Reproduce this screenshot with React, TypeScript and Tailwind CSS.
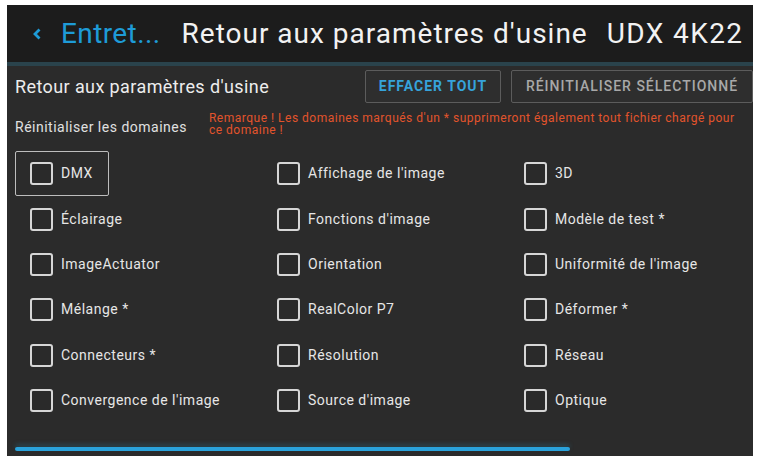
import React from "react";

const items: string[][] = [
  ["DMX", "Affichage de l'image", "3D"],
  ["Éclairage", "Fonctions d'image", "Modèle de test *"],
  ["ImageActuator", "Orientation", "Uniformité de l'image"],
  ["Mélange *", "RealColor P7", "Déformer *"],
  ["Connecteurs *", "Résolution", "Réseau"],
  ["Convergence de l'image", "Source d'image", "Optique"],
];

function Cell({ label, focused }: { label: string; focused?: boolean }) {
  return (
    <div className="flex items-center h-[45.4px]">
      <div
        className={
          "flex items-center h-full pl-[14px] pr-[15px] rounded-[2px] border " +
          (focused ? "border-[#bdbdbd]" : "border-transparent")
        }
      >
        <div className="w-[23px] h-[23px] rounded-[3px] border-2 border-[#d6d6d6] bg-[#2a2a2a]" />
        <span className="ml-[8px] text-[14px] tracking-[0.5px] text-[#e6e6e6] whitespace-nowrap">{label}</span>
      </div>
    </div>
  );
}

export default function App() {
  return (
    <div
      className="w-[762px] h-[456px] bg-white pt-[5px] pl-[7px] pr-[9px] overflow-hidden"
      style={{ fontFamily: "Roboto, 'Noto Sans', sans-serif" }}
    >
      <div className="h-full bg-[#2b2b2b] flex flex-col">
        <div className="h-[57px] bg-[#1c1c1c] flex items-center shrink-0">
          <svg width="10" height="14" viewBox="0 0 10 14" className="ml-[25px]">
            <path d="M7.5 2.5 L3 7 L7.5 11.5" fill="none" stroke="#1e9bd7" strokeWidth="2.8" />
          </svg>
          <span className="ml-[19px] text-[28px] tracking-[0.4px] text-[#1e9bd7] leading-none whitespace-nowrap">Entret...</span>
          <span className="ml-[21px] text-[28px] tracking-[1px] text-[#f2f2f2] leading-none whitespace-nowrap">Retour aux paramètres d'usine</span>
          <span className="ml-[19px] text-[28px] tracking-[1.4px] text-[#f2f2f2] leading-none whitespace-nowrap">UDX 4K22</span>
        </div>
        <div className="h-[4px] bg-[#2a434c] shrink-0" />
        <div className="flex items-center mt-[4px] h-[33px] shrink-0">
          <span className="ml-[8px] text-[18px] tracking-[0.4px] text-[#ededed] whitespace-nowrap">Retour aux paramètres d'usine</span>
          <div className="ml-auto flex gap-[10px]">
            <div className="w-[136px] h-[33px] border border-[#5c5c5c] rounded-[2px] bg-[#2e2e2e] flex items-center justify-center text-[14px] tracking-[1px] font-bold text-[#36a3da] whitespace-nowrap">
              EFFACER TOUT
            </div>
            <div className="w-[242px] h-[33px] border border-[#5c5c5c] rounded-[2px] bg-[#2e2e2e] flex items-center justify-center text-[14px] tracking-[1px] font-medium text-[#a8a8a8] whitespace-nowrap">
              RÉINITIALISER SÉLECTIONNÉ
            </div>
          </div>
        </div>
        <div className="flex items-start mt-[9px] h-[24px] shrink-0">
          <span className="ml-[8px] mt-[7px] text-[14px] leading-[17px] tracking-[0.5px] text-[#e0e0e0] whitespace-nowrap">Réinitialiser les domaines</span>
          <p className="ml-[22px] w-[540px] text-[12px] leading-[12px] tracking-[0.5px] text-[#e2542c]">
            Remarque ! Les domaines marqués d'un * supprimeront également tout fichier chargé pour ce domaine !
          </p>
        </div>
        <div className="mt-[15px] ml-[8px] grid grid-cols-[247px_247px_247px]">
          {items.map((row, r) =>
            row.map((label, c) => <Cell key={r + "-" + c} label={label} focused={r === 0 && c === 0} />)
          )}
        </div>
        <div className="mt-auto mb-[5px] ml-[8px] w-[555px] h-[4px] rounded-full bg-[#2aa3dc] shadow-[0_-3px_4px_rgba(40,120,150,0.35)]" />
      </div>
    </div>
  );
}
